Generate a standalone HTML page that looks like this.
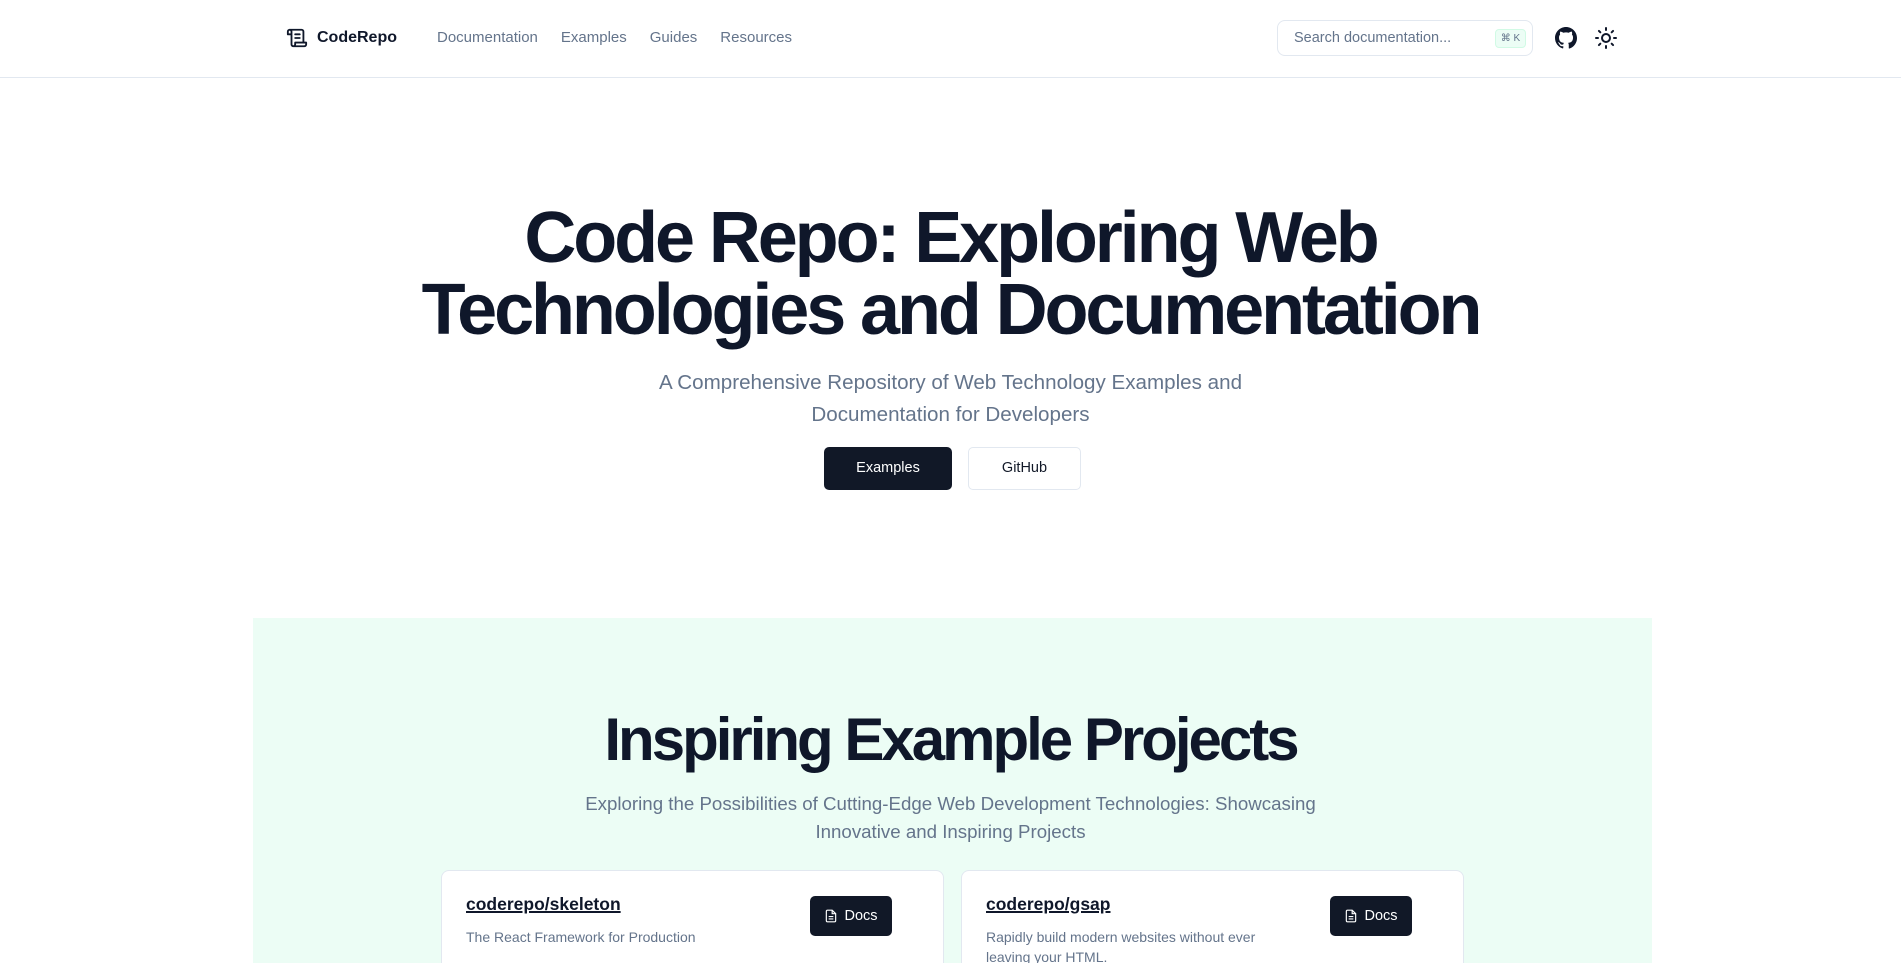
<!DOCTYPE html>
<html><head><meta charset="utf-8">
<style>
*{box-sizing:border-box;margin:0;padding:0}
html,body{width:1901px;height:963px;overflow:hidden}
body{background:#fff;font-family:"Liberation Sans",sans-serif;color:#0f172a;position:relative}
header{height:78px;border-bottom:1px solid #e2e8f0;position:relative}
.logo{position:absolute;left:286px;top:27px;display:flex;align-items:center;gap:9px;font-weight:bold;font-size:16px;color:#0f172a}
nav{position:absolute;left:437px;top:29px;font-size:15px;color:#64748b}
nav span{margin-right:23px}
.search{position:absolute;left:1277px;top:20px;width:256px;height:36px;border:1px solid #e2e8f0;border-radius:8px;font-size:14.5px;color:#64748b;padding:9px 0 0 16px}
.kbd{position:absolute;right:6px;top:8px;width:31px;height:19px;background:#ecfdf5;border:1px solid #d1fae5;border-radius:4px;font-size:10px;color:#64748b;text-align:center;line-height:17px}
.gh{position:absolute;left:1555px;top:27px}
.sun{position:absolute;left:1594px;top:26px}
h1{position:absolute;left:0;width:1901px;top:202px;text-align:center;font-size:72px;line-height:72px;font-weight:bold;letter-spacing:-3.1px;color:#0f172a}
.sub{position:absolute;left:0;width:1901px;top:367px;text-align:center;font-size:20.6px;line-height:32px;color:#64748b}
.btn1{position:absolute;left:824px;top:447px;width:128px;height:43px;background:#111827;color:#fff;border-radius:5px;font-size:14.5px;text-align:center;line-height:43px}
.btn2{position:absolute;left:968px;top:447px;width:113px;height:43px;border:1px solid #e2e8f0;border-radius:5px;font-size:14.5px;text-align:center;line-height:41px;color:#111827}
.green{position:absolute;left:253px;top:618px;width:1399px;height:345px;background:#ecfdf5}
h2{position:absolute;left:0;width:1901px;top:707px;text-align:center;font-size:60px;line-height:66px;font-weight:bold;letter-spacing:-3px;color:#0f172a}
.sub2{position:absolute;left:0;width:1901px;top:790px;text-align:center;font-size:18.7px;line-height:28px;color:#64748b}
.card{position:absolute;top:870px;width:503px;height:93px;background:#fff;border:1px solid #e2e8f0;border-bottom:none;border-radius:8px 8px 0 0}
.card .t{position:absolute;left:24px;top:23px;font-size:17.5px;font-weight:bold;text-decoration:underline;text-decoration-thickness:2px;color:#0f172a}
.card .d{position:absolute;left:24px;top:56px;width:300px;font-size:14px;line-height:20px;color:#64748b}
.docs{position:absolute;left:368px;top:25px;width:82px;height:40px;background:#111827;border-radius:5px;color:#fff;font-size:14.5px;display:flex;align-items:center;justify-content:center;gap:6px}
</style></head><body>
<header>
<div class="logo"><svg width="22" height="22" viewBox="0 0 24 24" fill="none" stroke="#0f172a" stroke-width="2" stroke-linecap="round" stroke-linejoin="round"><path d="M8 21h12a2 2 0 0 0 2-2v-2H10v2a2 2 0 1 1-4 0V5a2 2 0 1 0-4 0v3h4"/><path d="M19 17V5a2 2 0 0 0-2-2H4"/><path d="M15 8h-5M15 12h-5"/></svg>CodeRepo</div>
<nav><span>Documentation</span><span>Examples</span><span>Guides</span><span>Resources</span></nav>
<div class="search">Search documentation...<div class="kbd">⌘ K</div></div>
<svg class="gh" width="22" height="22" viewBox="0 0 16 16" fill="#0f172a"><path d="M8 0C3.58 0 0 3.58 0 8c0 3.54 2.29 6.530 5.47 7.59.4.07.55-.17.55-.38v-1.330c-2.23.48-2.7-1.07-2.7-1.07-.36-.92-.89-1.17-.89-1.17-.73-.5.06-.49.06-.49.8.06 1.23.83 1.23.83.71 1.22 1.87.87 2.33.66.07-.52.28-.87.51-1.07-1.78-.2-3.64-.89-3.64-3.95 0-.87.31-1.59.82-2.15-.08-.2-.36-1.02.08-2.12 0 0 .67-.21 2.2.82a7.6 7.6 0 0 1 4 0c1.53-1.04 2.2-.82 2.2-.82.44 1.1.16 1.92.08 2.12.51.56.82 1.27.82 2.15 0 3.07-1.87 3.75-3.65 3.95.29.25.54.73.54 1.48v2.2c0 .21.15.46.55.38A8 8 0 0 0 16 8c0-4.42-3.58-8-8-8z"/></svg>
<svg class="sun" width="24" height="24" viewBox="0 0 24 24" fill="none" stroke="#0f172a" stroke-width="2" stroke-linecap="round"><circle cx="12" cy="12" r="4"/><path d="M12 2v2M12 20v2M4.93 4.93l1.41 1.41M17.66 17.66l1.41 1.41M2 12h2M20 12h2M6.34 17.66l-1.41 1.41M19.07 4.93l-1.41 1.41"/></svg>
</header>
<h1>Code Repo: Exploring Web<br>Technologies and Documentation</h1>
<div class="sub">A Comprehensive Repository of Web Technology Examples and<br>Documentation for Developers</div>
<div class="btn1">Examples</div>
<div class="btn2">GitHub</div>
<div class="green"></div>
<h2>Inspiring Example Projects</h2>
<div class="sub2">Exploring the Possibilities of Cutting-Edge Web Development Technologies: Showcasing<br>Innovative and Inspiring Projects</div>
<div class="card" style="left:441px"><div class="t">coderepo/skeleton</div><div class="d">The React Framework for Production</div><div class="docs"><svg width="14" height="16" viewBox="0 0 24 24" fill="none" stroke="#fff" stroke-width="2"><path d="M14 2H6a2 2 0 0 0-2 2v16a2 2 0 0 0 2 2h12a2 2 0 0 0 2-2V8z"/><path d="M14 2v6h6M16 13H8M16 17H8"/></svg>Docs</div></div>
<div class="card" style="left:961px"><div class="t">coderepo/gsap</div><div class="d">Rapidly build modern websites without ever leaving your HTML.</div><div class="docs"><svg width="14" height="16" viewBox="0 0 24 24" fill="none" stroke="#fff" stroke-width="2"><path d="M14 2H6a2 2 0 0 0-2 2v16a2 2 0 0 0 2 2h12a2 2 0 0 0 2-2V8z"/><path d="M14 2v6h6M16 13H8M16 17H8"/></svg>Docs</div></div>
</body></html>
